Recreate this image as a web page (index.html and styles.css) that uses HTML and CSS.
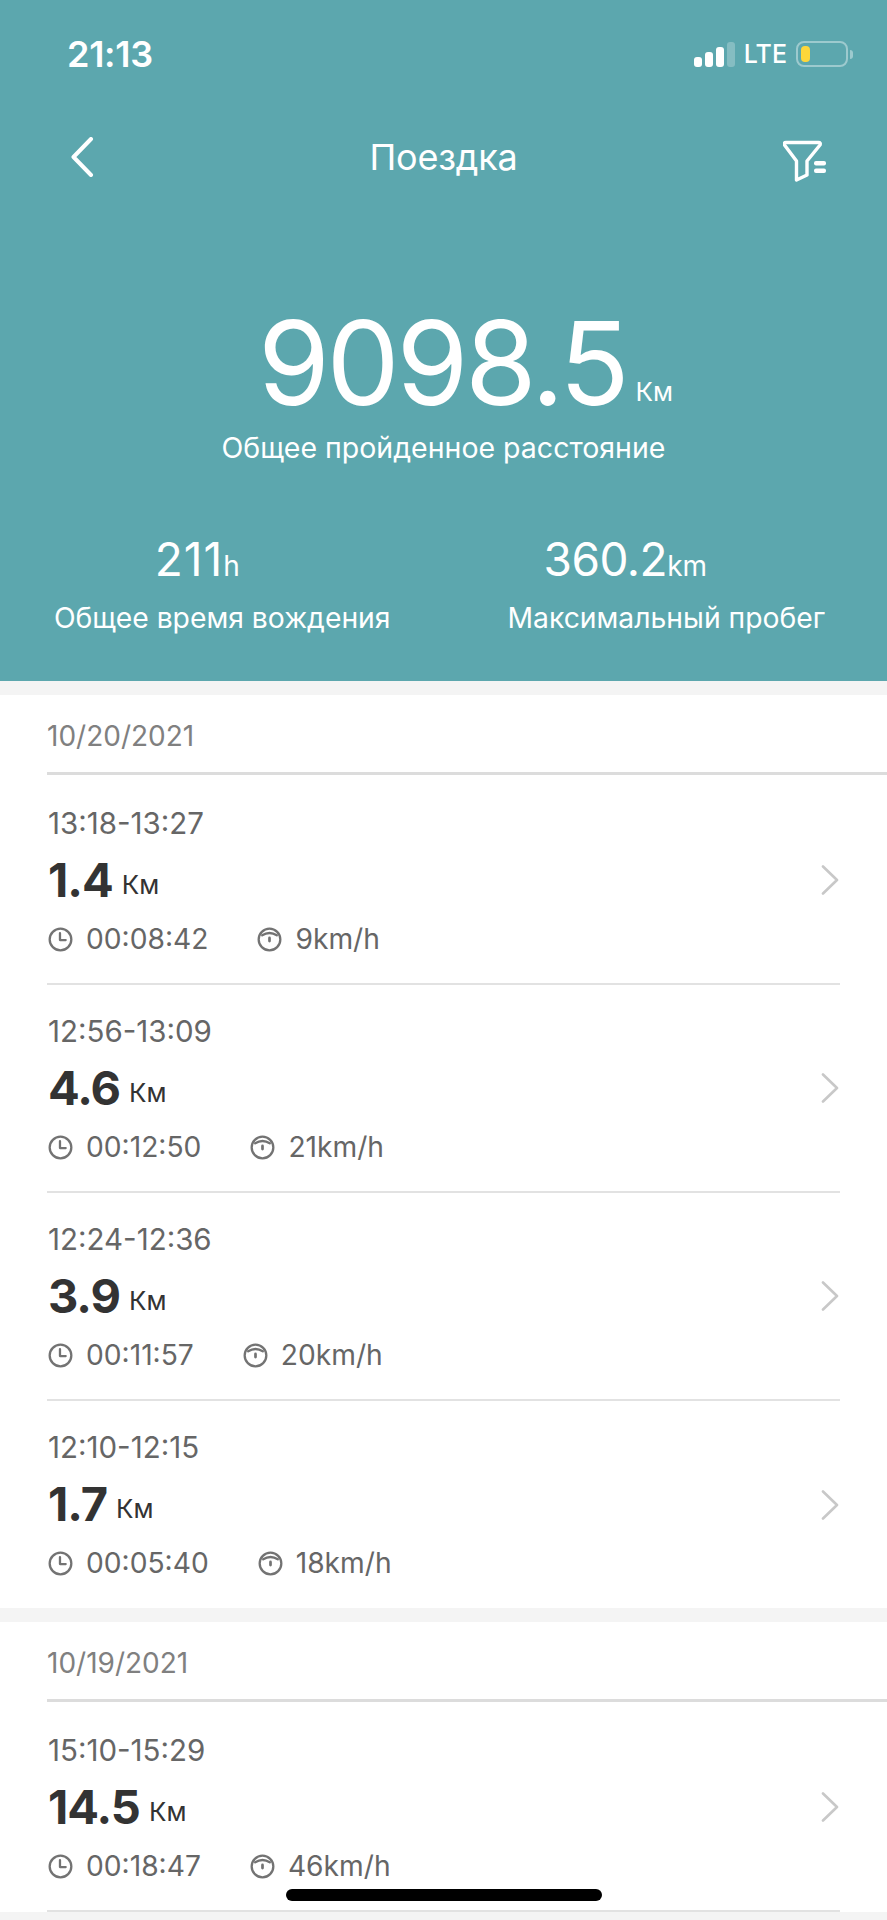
FILE: index.html
```html
<!DOCTYPE html>
<html>
<head>
<title>Поездка</title>
<meta charset="utf-8" />
<meta name="viewport" content="width=device-width, initial-scale=1.0" />
<link rel="stylesheet" href="styles.css">
</head>
<body>
<div class="screen">
  <header class="top">
    <div class="status">
      <span class="clock-time">21:13</span>
      <div class="status-right">
        <div class="bars"><i class="b1"></i><i class="b2"></i><i class="b3"></i><i class="b4"></i></div>
        <span class="lte">LTE</span>
        <div class="battery"><i></i></div>
        <div class="nub"></div>
      </div>
    </div>
    <nav class="nav">
      <svg class="back" width="24" height="40" viewBox="0 0 24 40"><path d="M21 2 L3.5 20 L21 38" fill="none" stroke="#fff" stroke-width="4" stroke-linecap="round" stroke-linejoin="round"/></svg>
      <h1>Поездка</h1>
      <svg class="filter" width="44" height="44" viewBox="0 0 44 44"><path d="M3 2.500 H35.500 Q38 2.500 37 5 L24 21 V35 L13.500 40 V21 L1.500 5 Q0.500 2.500 3 2.500 Z" fill="none" stroke="#fff" stroke-width="3.400" stroke-linejoin="round"/><rect x="31" y="21" width="12" height="4.500" rx="2" fill="#fff"/><rect x="31" y="28.500" width="12" height="4.500" rx="2" fill="#fff"/></svg>
    </nav>
    <div class="total">
      <div class="total-value">9098.5<small>Км</small></div>
      <div class="total-label">Общее пройденное расстояние</div>
    </div>
    <div class="stats">
      <div class="stat">
        <div class="stat-value v-time">211<small>h</small></div>
        <div class="stat-label">Общее время вождения</div>
      </div>
      <div class="stat">
        <div class="stat-value v-max">360.2<small>km</small></div>
        <div class="stat-label">Максимальный пробег</div>
      </div>
    </div>
  </header>

  <section class="day">
    <div class="day-date">10/20/2021</div>
    <div class="trip">
      <div class="trip-info">
        <div class="trip-time">13:18-13:27</div>
        <div class="trip-dist"><b>1.4</b><small>Км</small></div>
        <div class="trip-meta">
          <span class="meta"><svg class="ico" viewBox="0 0 24 24"><use href="#clock"/></svg>00:08:42</span>
          <span class="meta"><svg class="ico" viewBox="0 0 24 24"><use href="#speed"/></svg>9km/h</span>
        </div>
      </div>
      <svg class="chev" width="18" height="30" viewBox="0 0 18 30"><use href="#chevron"/></svg>
    </div>
    <div class="trip">
      <div class="trip-info">
        <div class="trip-time">12:56-13:09</div>
        <div class="trip-dist"><b>4.6</b><small>Км</small></div>
        <div class="trip-meta">
          <span class="meta"><svg class="ico" viewBox="0 0 24 24"><use href="#clock"/></svg>00:12:50</span>
          <span class="meta"><svg class="ico" viewBox="0 0 24 24"><use href="#speed"/></svg>21km/h</span>
        </div>
      </div>
      <svg class="chev" width="18" height="30" viewBox="0 0 18 30"><use href="#chevron"/></svg>
    </div>
    <div class="trip">
      <div class="trip-info">
        <div class="trip-time">12:24-12:36</div>
        <div class="trip-dist"><b>3.9</b><small>Км</small></div>
        <div class="trip-meta">
          <span class="meta"><svg class="ico" viewBox="0 0 24 24"><use href="#clock"/></svg>00:11:57</span>
          <span class="meta"><svg class="ico" viewBox="0 0 24 24"><use href="#speed"/></svg>20km/h</span>
        </div>
      </div>
      <svg class="chev" width="18" height="30" viewBox="0 0 18 30"><use href="#chevron"/></svg>
    </div>
    <div class="trip last">
      <div class="trip-info">
        <div class="trip-time">12:10-12:15</div>
        <div class="trip-dist"><b>1.7</b><small>Км</small></div>
        <div class="trip-meta">
          <span class="meta"><svg class="ico" viewBox="0 0 24 24"><use href="#clock"/></svg>00:05:40</span>
          <span class="meta"><svg class="ico" viewBox="0 0 24 24"><use href="#speed"/></svg>18km/h</span>
        </div>
      </div>
      <svg class="chev" width="18" height="30" viewBox="0 0 18 30"><use href="#chevron"/></svg>
    </div>
  </section>

  <section class="day">
    <div class="day-date">10/19/2021</div>
    <div class="trip">
      <div class="trip-info">
        <div class="trip-time">15:10-15:29</div>
        <div class="trip-dist"><b>14.5</b><small>Км</small></div>
        <div class="trip-meta">
          <span class="meta"><svg class="ico" viewBox="0 0 24 24"><use href="#clock"/></svg>00:18:47</span>
          <span class="meta"><svg class="ico" viewBox="0 0 24 24"><use href="#speed"/></svg>46km/h</span>
        </div>
      </div>
      <svg class="chev" width="18" height="30" viewBox="0 0 18 30"><use href="#chevron"/></svg>
    </div>
  </section>

  <div class="home-bar"></div>
</div>

<svg class="defs" width="0" height="0">
  <defs>
    <g id="clock" fill="none" stroke="#737373" stroke-width="2.200" stroke-linecap="round" stroke-linejoin="round">
      <circle cx="12" cy="12" r="10.400"/>
      <path d="M11.500 6 V12.500 H17"/>
    </g>
    <g id="speed" fill="none" stroke="#737373" stroke-width="2.200" stroke-linecap="round">
      <circle cx="12" cy="12" r="10.400"/>
      <path d="M5 8 Q12 3.500 19 8"/>
      <path d="M12 10.500 V13.500" stroke-width="2.600"/>
    </g>
    <path id="chevron" d="M2 1.500 L16 15 L2 28.500" fill="none" stroke="#c8c8c8" stroke-width="2.600" stroke-linecap="round" stroke-linejoin="round"/>
  </defs>
</svg>
</body>
</html>
```
FILE: styles.css
```css
* {
  box-sizing: border-box;
}

body {
  margin: 0;
  background: #f4f4f4;
  font-family: 'Inter', 'Roboto', sans-serif;
  color: #666;
}

h1 {
  margin: 0 10px 0 0;
  font-size: 36px;
  font-weight: 400;
  letter-spacing: -0.2px;
}

small {
  font-weight: 400;
  line-height: 1;
}

.screen {
  position: relative;
  height: 1920px;
  overflow: hidden;
}

.defs {
  position: absolute;
}

/* teal header */
.top {
  height: 681px;
  background: #5ca7ae;
  color: #fff;
  padding-top: 38px;
}

.status {
  display: flex;
  justify-content: space-between;
  align-items: center;
  height: 32px;
  padding: 0 34px 0 67px;
}

.clock-time {
  font-size: 36px;
  font-weight: 600;
  letter-spacing: -0.3px;
}

.status-right {
  display: flex;
  align-items: center;
}

.bars {
  display: flex;
  align-items: flex-end;
  gap: 3.500px;
  height: 26px;
}

.bars i {
  display: block;
  width: 7.500px;
  background: #fff;
  border-radius: 3px;
}

.bars .b1 { height: 10px; }
.bars .b2 { height: 15px; }
.bars .b3 { height: 20px; }
.bars .b4 { height: 25px; background: rgba(255,255,255,0.25); }

.lte {
  margin-left: 9px;
  font-size: 25px;
  font-weight: 500;
}

.battery {
  width: 52px;
  height: 26px;
  margin-left: 9px;
  padding: 3px;
  border: 2px solid rgba(255,255,255,0.4);
  border-radius: 8px;
}

.battery i {
  display: block;
  width: 9px;
  height: 100%;
  background: #fdd73a;
  border-radius: 4px;
}

.nub {
  width: 3px;
  height: 9px;
  margin-left: 2px;
  background: rgba(255,255,255,0.4);
  border-radius: 0 3px 3px 0;
}

.nav {
  display: grid;
  grid-template-columns: 1fr auto 1fr;
  grid-template-rows: 44px;
  align-items: center;
  height: 44px;
  margin-top: 65px;
  padding: 0 60px 0 70px;
}

.filter {
  justify-self: end;
  margin-top: 10px;
}

.total {
  margin-top: 126px;
  text-align: center;
}

.total-value {
  padding-left: 44px;
  font-size: 116px;
  line-height: 116px;
  letter-spacing: -3.300px;
}

.total-value small {
  margin-left: 9px;
  font-size: 26px;
  letter-spacing: 0;
  position: relative;
  top: -4px;
}

.total-label {
  margin-top: 11px;
  font-size: 28.500px;
  line-height: 32px;
}

.stats {
  display: flex;
  justify-content: center;
  gap: 117px;
  margin-top: 71px;
  padding-right: 8px;
}

.stat {
  display: flex;
  flex-direction: column;
  align-items: center;
}

.stat-value {
  font-size: 46px;
  line-height: 48px;
  letter-spacing: -0.5px;
}

.stat-value small {
  font-size: 28px;
  letter-spacing: 0;
}

.v-time {
  margin-right: 50px;
  letter-spacing: 1px;
}

.v-max {
  margin-right: 82px;
}

.stat-label {
  margin-top: 19px;
  font-size: 28.300px;
  line-height: 32px;
}

/* trip list */
.day {
  margin-top: 14px;
  background: #fff;
}

.day-date {
  height: 80px;
  margin-left: 47px;
  margin-bottom: 2px;
  padding-top: 25px;
  border-bottom: 3px solid #dcdcdc;
  color: #808080;
  font-size: 28px;
  line-height: 32px;
}

.trip {
  display: flex;
  justify-content: space-between;
  align-items: center;
  height: 208px;
  margin: 0 47px;
  padding: 0 1px;
  border-bottom: 2px solid #e2e2e2;
}

.trip.last {
  height: 207px;
  border-bottom: 0;
}

.trip-info {
  align-self: flex-start;
  padding-top: 30px;
}

.trip-time {
  font-size: 29.500px;
  line-height: 32px;
}

.trip-dist {
  margin-top: 14px;
  color: #333;
  font-size: 47px;
  line-height: 54px;
}

.trip-dist b {
  font-weight: 700;
  letter-spacing: -1px;
}

.trip-dist small {
  margin-left: 9px;
  font-size: 26px;
  position: relative;
  top: -3px;
}

.trip-meta {
  display: flex;
  gap: 49px;
  margin-top: 16px;
}

.meta {
  display: flex;
  align-items: center;
  gap: 13px;
  font-size: 28.200px;
  line-height: 32px;
}

.ico {
  width: 25px;
  height: 25px;
}

.home-bar {
  position: absolute;
  left: 286px;
  top: 1889px;
  width: 316px;
  height: 12px;
  background: #000;
  border-radius: 6px;
}
```
